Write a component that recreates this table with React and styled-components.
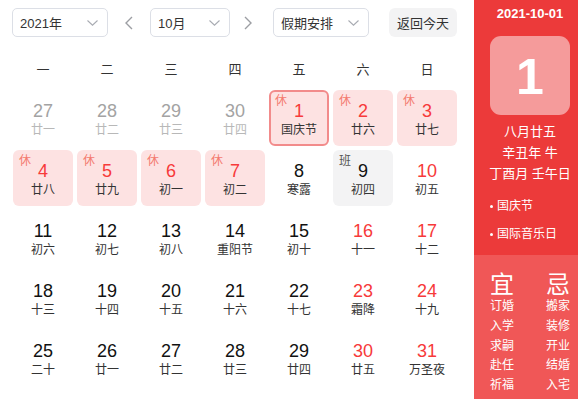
import React from "react";
import styled, { createGlobalStyle } from "styled-components";

const Global = createGlobalStyle`
  html, body { margin: 0; padding: 0; background: #fff; }
  body { font-family: "Liberation Sans", "Noto Sans CJK SC", sans-serif; overflow: hidden; }
  * { box-sizing: border-box; }
`;

const Page = styled.div`
  display: flex;
  width: 578px;
  height: 399px;
  overflow: hidden;
`;

const Main = styled.div`
  width: 474px;
  flex: none;
  padding: 8px 17px 0 12px;
`;

const Toolbar = styled.div`
  display: flex;
  align-items: center;
  height: 29px;
`;

const Select = styled.div`
  display: flex;
  align-items: center;
  justify-content: space-between;
  width: ${(p) => p.$w}px;
  margin-left: ${(p) => p.$ml || 0}px;
  height: 29px;
  border: 1px solid #dcdfe6;
  border-radius: 5px;
  padding: 0 9px 0 7px;
  font-size: 13px;
  color: #333;
`;

const ArrowBtn = styled.div`
  display: flex;
  align-items: center;
  justify-content: center;
  width: ${(p) => p.$w}px;
  height: 29px;
`;

const ReturnBtn = styled.div`
  margin-left: 20px;
  width: 68px;
  height: 29px;
  border-radius: 6px;
  background: #f3f3f4;
  color: #333;
  font-size: 13px;
  display: flex;
  align-items: center;
  justify-content: center;
`;

const WeekHeader = styled.div`
  display: grid;
  grid-template-columns: repeat(7, 60px);
  column-gap: 4px;
  margin: 19px 0 0 1px;
  height: 28px;
  line-height: 28px;
  font-size: 13px;
  color: #333;
  text-align: center;
`;

const Grid = styled.div`
  display: grid;
  grid-template-columns: repeat(7, 60px);
  grid-auto-rows: 56px;
  gap: 4px;
  margin: 6px 0 0 1px;
`;

const Cell = styled.div`
  position: relative;
  display: flex;
  flex-direction: column;
  align-items: center;
  padding-top: ${(p) => (p.$sel ? 9 : 11)}px;
  border-radius: 6px;
  background: ${(p) => (p.$kind === "rest" ? "#fde2e2" : p.$kind === "work" ? "#f3f3f4" : "transparent")};
  border: ${(p) => (p.$sel ? "2px solid #f28b8b" : "none")};
`;

const Num = styled.div`
  font-size: 18px;
  line-height: 20px;
  color: ${(p) => (p.$tone === "red" ? "#f73a3a" : p.$tone === "grey" ? "#a3a3a3" : "#111")};
`;

const Lunar = styled.div`
  font-size: 12px;
  line-height: 18px;
  color: ${(p) => (p.$grey ? "#b8b8b8" : "#333")};
  white-space: nowrap;
`;

const Tag = styled.span`
  position: absolute;
  left: ${(p) => (p.$sel ? 4 : 6)}px;
  top: ${(p) => (p.$sel ? 2 : 4)}px;
  font-size: 12px;
  line-height: 14px;
  color: ${(p) => (p.$work ? "#555" : "#f47a6e")};
`;

const Side = styled.div`
  width: 104px;
  flex: none;
  height: 399px;
  display: flex;
  flex-direction: column;
  color: #fff;
`;

const SideTop = styled.div`
  height: 255px;
  background: #ec3a3a;
  padding: 6px 0 0 8px;
  display: flex;
  flex-direction: column;
  align-items: center;
`;

const DateLine = styled.div`
  font-size: 13px;
  font-weight: bold;
  line-height: 16px;
`;

const BigDay = styled.div`
  margin-top: 14px;
  width: 80px;
  height: 79px;
  border-radius: 11px;
  background: #f59b9b;
  display: flex;
  align-items: center;
  justify-content: center;
  font-size: 50px;
  font-weight: bold;
  line-height: 1;
  padding-top: 2px;
`;

const LunarInfo = styled.div`
  margin-top: 6px;
  font-size: 13px;
  line-height: 21px;
  text-align: center;
  white-space: nowrap;
`;

const Festivals = styled.ul`
  list-style: none;
  margin: 8px 0 0 0;
  padding: 0 0 0 8px;
  align-self: stretch;
`;

const Festival = styled.li`
  font-size: 12px;
  line-height: 28px;
  display: flex;
  align-items: center;
  &::before {
    content: "";
    width: 3px;
    height: 3px;
    background: #fff;
    border-radius: 50%;
    margin-right: 4px;
  }
`;

const SideBottom = styled.div`
  flex: 1;
  background: #f05757;
  padding: 18px 0 0 6px;
  display: grid;
  grid-template-columns: 44px 44px;
  column-gap: 12px;
  align-content: start;
`;

const YiCol = styled.div`
  display: flex;
  flex-direction: column;
  align-items: center;
`;

const YiHead = styled.div`
  font-size: 24px;
  line-height: 24px;
`;

const YiItem = styled.div`
  font-size: 12px;
  line-height: 19.8px;
`;

const Chevron = () => (
  <svg width="11" height="6" viewBox="0 0 11 6">
    <polyline points="0.5,0.5 5.5,5.2 10.5,0.5" fill="none" stroke="#a8abb2" strokeWidth="1.1" />
  </svg>
);

const Arrow = ({ dir }) => (
  <svg width="8" height="14" viewBox="0 0 8 14">
    <polyline
      points={dir === "left" ? "7,1 1,7 7,13" : "1,1 7,7 1,13"}
      fill="none"
      stroke="#9c9ea3"
      strokeWidth="1.4"
    />
  </svg>
);

const weekdays = ["一", "二", "三", "四", "五", "六", "日"];

const days = [
  { n: 27, l: "廿一", t: "grey" },
  { n: 28, l: "廿二", t: "grey" },
  { n: 29, l: "廿三", t: "grey" },
  { n: 30, l: "廿四", t: "grey" },
  { n: 1, l: "国庆节", t: "red", k: "rest", sel: true },
  { n: 2, l: "廿六", t: "red", k: "rest" },
  { n: 3, l: "廿七", t: "red", k: "rest" },
  { n: 4, l: "廿八", t: "red", k: "rest" },
  { n: 5, l: "廿九", t: "red", k: "rest" },
  { n: 6, l: "初一", t: "red", k: "rest" },
  { n: 7, l: "初二", t: "red", k: "rest" },
  { n: 8, l: "寒露" },
  { n: 9, l: "初四", k: "work" },
  { n: 10, l: "初五", t: "red" },
  { n: 11, l: "初六" },
  { n: 12, l: "初七" },
  { n: 13, l: "初八" },
  { n: 14, l: "重阳节" },
  { n: 15, l: "初十" },
  { n: 16, l: "十一", t: "red" },
  { n: 17, l: "十二", t: "red" },
  { n: 18, l: "十三" },
  { n: 19, l: "十四" },
  { n: 20, l: "十五" },
  { n: 21, l: "十六" },
  { n: 22, l: "十七" },
  { n: 23, l: "霜降", t: "red" },
  { n: 24, l: "十九", t: "red" },
  { n: 25, l: "二十" },
  { n: 26, l: "廿一" },
  { n: 27, l: "廿二" },
  { n: 28, l: "廿三" },
  { n: 29, l: "廿四" },
  { n: 30, l: "廿五", t: "red" },
  { n: 31, l: "万圣夜", t: "red" },
];

const yi = ["订婚", "入学", "求嗣", "赴任", "祈福"];
const ji = ["搬家", "装修", "开业", "结婚", "入宅"];

export default function App() {
  return (
    <>
      <Global />
      <Page>
        <Main>
          <Toolbar>
            <Select $w={96}>
              <span>2021年</span>
              <Chevron />
            </Select>
            <ArrowBtn $w={42}>
              <Arrow dir="left" />
            </ArrowBtn>
            <Select $w={80}>
              <span>10月</span>
              <Chevron />
            </Select>
            <ArrowBtn $w={35}>
              <Arrow dir="right" />
            </ArrowBtn>
            <Select $w={96} $ml={8}>
              <span>假期安排</span>
              <Chevron />
            </Select>
            <ReturnBtn>返回今天</ReturnBtn>
          </Toolbar>
          <WeekHeader>
            {weekdays.map((w) => (
              <div key={w}>{w}</div>
            ))}
          </WeekHeader>
          <Grid>
            {days.map((d, i) => (
              <Cell key={i} $kind={d.k} $sel={d.sel}>
                {d.k === "rest" && <Tag $sel={d.sel}>休</Tag>}
                {d.k === "work" && <Tag $work>班</Tag>}
                <Num $tone={d.t}>{d.n}</Num>
                <Lunar $grey={d.t === "grey"}>{d.l}</Lunar>
              </Cell>
            ))}
          </Grid>
        </Main>
        <Side>
          <SideTop>
            <DateLine>2021-10-01</DateLine>
            <BigDay>1</BigDay>
            <LunarInfo>
              八月廿五
              <br />
              辛丑年 牛
              <br />
              丁酉月 壬午日
            </LunarInfo>
            <Festivals>
              <Festival>国庆节</Festival>
              <Festival>国际音乐日</Festival>
            </Festivals>
          </SideTop>
          <SideBottom>
            <YiCol>
              <YiHead>宜</YiHead>
              {yi.map((x) => (
                <YiItem key={x}>{x}</YiItem>
              ))}
            </YiCol>
            <YiCol>
              <YiHead>忌</YiHead>
              {ji.map((x) => (
                <YiItem key={x}>{x}</YiItem>
              ))}
            </YiCol>
          </SideBottom>
        </Side>
      </Page>
    </>
  );
}
